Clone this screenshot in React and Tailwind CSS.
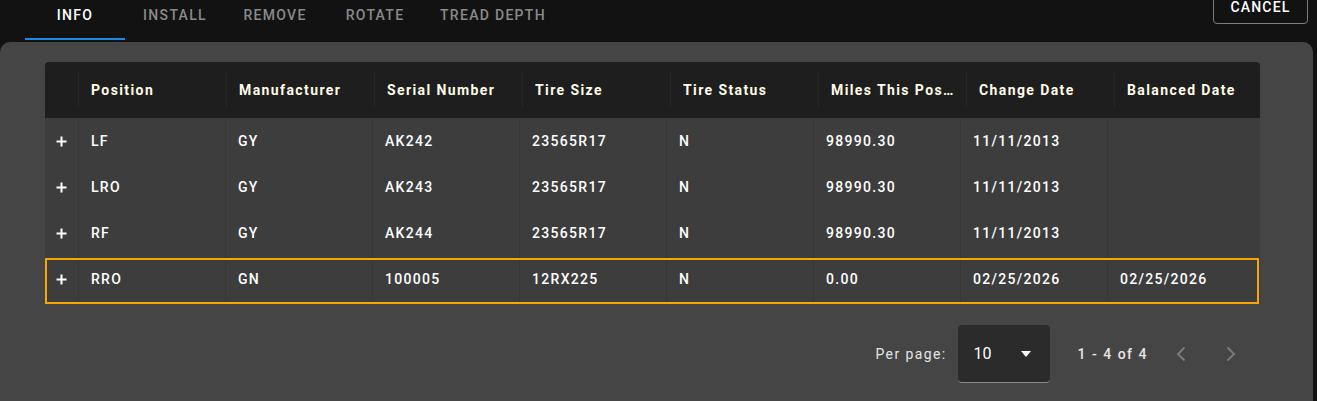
import React from "react";

const headers = [
    "Position",
    "Manufacturer",
    "Serial Number",
    "Tire Size",
    "Tire Status",
    "Miles This Position",
    "Change Date",
    "Balanced Date",
];

const rows = [
    { id: 1, cells: ["LF", "GY", "AK242", "23565R17", "N", "98990.30", "11/11/2013", ""] },
    { id: 2, cells: ["LRO", "GY", "AK243", "23565R17", "N", "98990.30", "11/11/2013", ""] },
    { id: 3, cells: ["RF", "GY", "AK244", "23565R17", "N", "98990.30", "11/11/2013", ""] },
    { id: 4, cells: ["RRO", "GN", "100005", "12RX225", "N", "0.00", "02/25/2026", "02/25/2026"], selected: true },
];

const tabs = ["INFO", "INSTALL", "REMOVE", "ROTATE", "TREAD DEPTH"];

const PlusIcon = () => (
    <svg width="11" height="11" viewBox="0 0 11 11">
        <path d="M5.5 0.5v10M0.5 5.5h10" stroke="#ffffff" strokeWidth="2" />
    </svg>
);

const Chevron = ({ dir }) => (
    <svg width="10" height="16" viewBox="0 0 10 16" fill="none">
        {dir === "left" ? (
            <path d="M8.5 1.5L2 8l6.5 6.5" stroke="#7a7a7a" strokeWidth="2" />
        ) : (
            <path d="M1.5 1.5L8 8l-6.5 6.5" stroke="#7a7a7a" strokeWidth="2" />
        )}
    </svg>
);

const App = () => {
    return (
        <div className="w-[1317px] h-[401px] overflow-hidden bg-[#121212] flex flex-col font-['Roboto',sans-serif]">

            {/* Tabs bar */}
            <div className="h-[42px] flex justify-between shrink-0">
                <div className="flex pl-[25px]">
                    {tabs.map((tab, i) => (
                        <div
                            key={tab}
                            className={`h-[40px] min-w-[100px] px-[15px] pt-[7px] flex justify-center text-[14px] font-medium tracking-[1.3px] leading-[16px] border-b-2 ${
                                i === 0
                                    ? "text-white font-bold border-[#1e88e5]"
                                    : "text-[#8a8a8a] border-transparent"
                            }`}
                        >
                            {tab}
                        </div>
                    ))}
                </div>

                <button className="mt-[-10px] mr-[9px] h-[34px] w-[95px] pt-[8px] flex justify-center border border-[#7c7c7c] rounded-[4px] text-white text-[14px] font-medium tracking-[1.2px] leading-[16px]">
                    CANCEL
                </button>
            </div>

            {/* Panel */}
            <div className="flex-1 bg-[#454545] rounded-t-[10px] mr-[4px] pt-[20px] pl-[45px]">
                <div className="w-[1215px]">

                    {/* Header */}
                    <div className="grid grid-cols-[33px_repeat(7,148px)_146px] h-[56px] items-center bg-[#1e1e1e] rounded-t-[4px]">
                        <div />
                        {headers.map((h) => (
                            <div
                                key={h}
                                className="h-[36px] flex items-center pl-[12px] pr-[10px] border-l border-[#262626] min-w-0"
                            >
                                <span className="truncate text-[#fffbe8] text-[14px] font-bold tracking-[1.4px]">
                                    {h}
                                </span>
                            </div>
                        ))}
                    </div>

                    {/* Body */}
                    {rows.map((row) => (
                        <div
                            key={row.id}
                            className="relative grid grid-cols-[33px_repeat(7,147px)_153px] h-[46px] bg-[#3d3d3d]"
                        >
                            <div className="flex items-center justify-center">
                                <PlusIcon />
                            </div>
                            {row.cells.map((c, i) => (
                                <div
                                    key={i}
                                    className="flex items-center px-[12px] border-l border-[#373737] text-white text-[14px] font-medium tracking-[1.3px]"
                                >
                                    {c}
                                </div>
                            ))}
                            {row.selected && (
                                <div className="absolute left-0 right-[1px] top-[2px] h-[46px] border-2 border-[#f9a602] pointer-events-none" />
                            )}
                        </div>
                    ))}

                    {/* Pagination */}
                    <div className="mt-[23px] flex justify-end items-center pr-[5px]">
                        <span className="text-[#e6e6e6] text-[14px] tracking-[1.4px]">Per page:</span>
                        <div className="ml-[11px] w-[92px] h-[58px] bg-[#2b2b2b] rounded-[4px] border-b border-[#8a8a8a] flex items-center justify-between pl-[16px] pr-[19px]">
                            <span className="text-white text-[16px]">10</span>
                            <svg width="10" height="6" viewBox="0 0 10 6">
                                <path d="M0 0h10L5 6z" fill="#ffffff" />
                            </svg>
                        </div>
                        <span className="ml-[28px] text-[#e6e6e6] text-[14px] font-medium tracking-[1.5px]">
                            1 - 4 of 4
                        </span>
                        <button className="ml-[9px] w-[48px] h-[48px] flex items-center justify-center">
                            <Chevron dir="left" />
                        </button>
                        <button className="ml-[2px] w-[48px] h-[48px] flex items-center justify-center">
                            <Chevron dir="right" />
                        </button>
                    </div>
                </div>
            </div>
        </div>
    );
};

export default App;
